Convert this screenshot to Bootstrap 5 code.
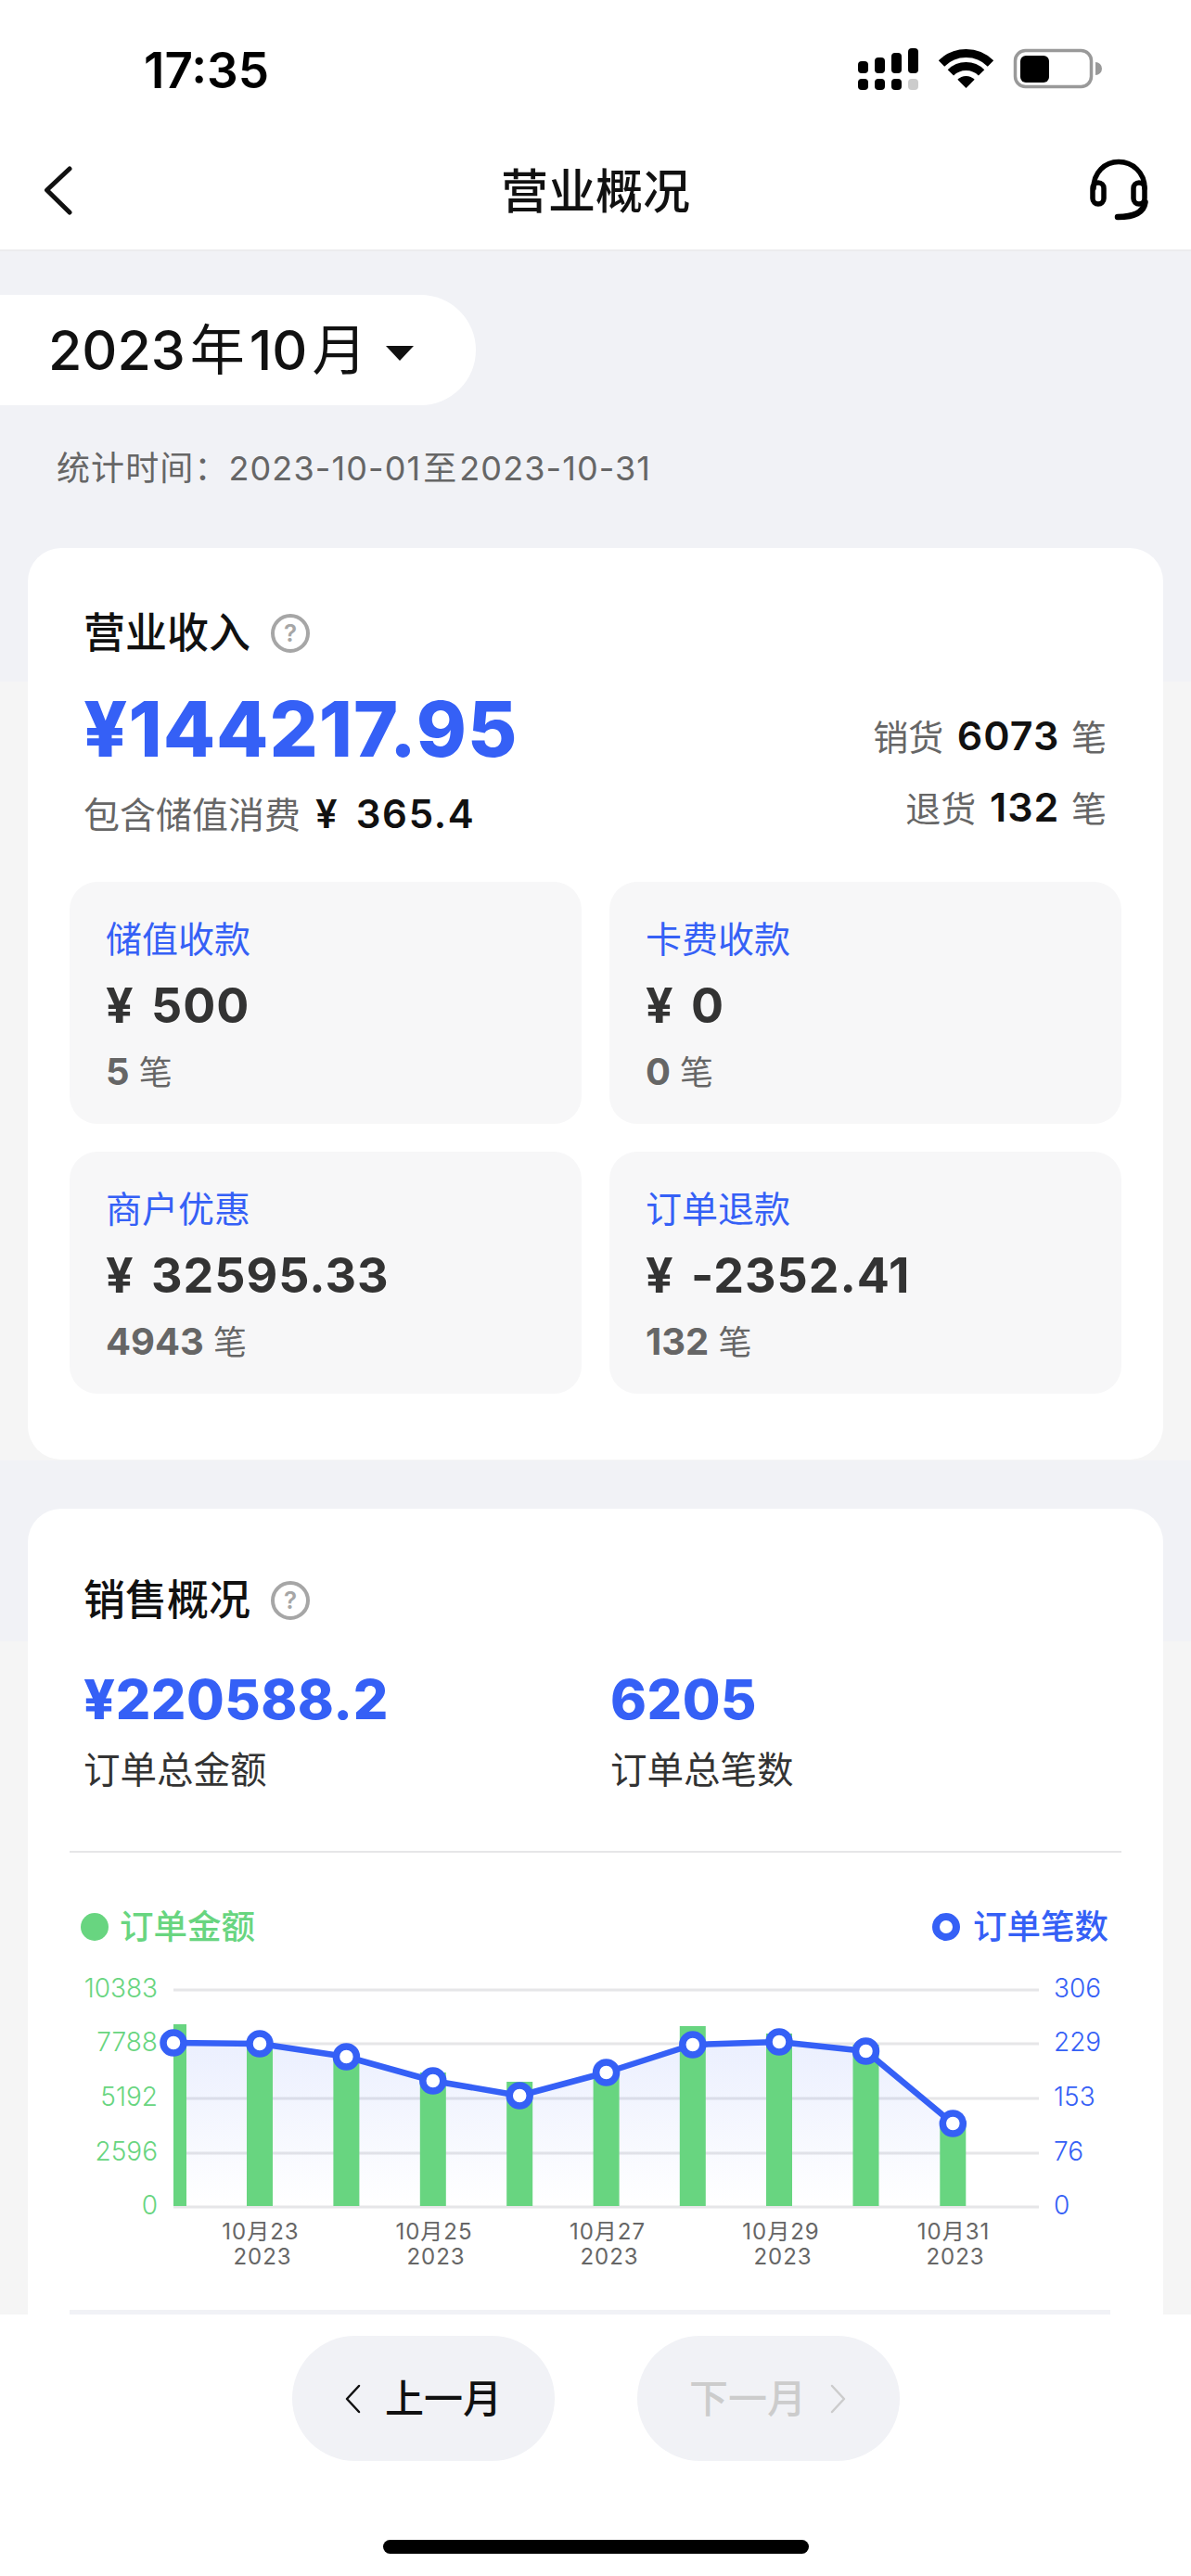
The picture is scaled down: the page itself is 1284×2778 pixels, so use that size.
<!DOCTYPE html>
<html lang="zh">
<head>
<meta charset="utf-8">
<title>营业概况</title>
<link href="https://cdn.jsdelivr.net/npm/bootstrap@5.3.0/dist/css/bootstrap.min.css" rel="stylesheet">
<style>
html,body{margin:0;width:1284px;height:2778px;overflow:hidden;background:#fff}
body{font-family:Inter,"Noto Sans CJK SC",sans-serif;color:#111;display:flex;flex-direction:column}
.status-strip{height:141px;padding:49px 95px 0 155px;flex:none}
.status-time{font-size:53px;line-height:54px;font-weight:600;color:#000}
.status-icons{width:264px;height:50px;display:block}
.top-nav{height:130px;flex:none;padding:0;border-bottom:2px solid #ececee;flex-wrap:nowrap}
.nav-side{width:200px;display:flex}
.nav-side.back{padding-left:47px}
.nav-side.help{justify-content:flex-end;padding-right:45px}
.nav-title{font-size:51px;line-height:60px;font-weight:500;color:#111;margin-top:4px}
.page-scroll{flex:1 1 auto;overflow:hidden;min-height:0}
.band-a{background:linear-gradient(#f1f2f6 464px,#f5f5f5 464px);padding:47px 30px 1px}
.band-b{background:linear-gradient(#f1f2f6 195px,#f5f5f5 195px);padding:52px 30px 0}
.month-pill{width:513px;height:119px;margin-left:-30px;padding-left:52px;background:#fff;border-radius:0 60px 60px 0;font-size:59px;font-weight:500;color:#111;line-height:119px;white-space:nowrap}
.month-pill .cjk{margin:0 5px;font-weight:400}
.month-pill .tri{width:30px;height:16px;margin-left:16px;display:inline-block;vertical-align:10px}
.stat-range{margin:43px 0 0 31px;font-size:36px;line-height:50px;color:#666;letter-spacing:1.100px}
.stat-range span{margin:0 2px}
.panel{border:0;background:#fff;border-radius:36px;padding:0 45px}
.panel.one{margin-top:61px;height:983px;padding-top:62px}
.panel.two{padding-top:69px;height:1000px}
.panel-title{font-size:45px;line-height:60px;font-weight:500;margin-left:15px;color:#111}
.qmark{width:42px;height:42px;border:4px solid #a6a6a6;border-radius:50%;color:#a6a6a6;font-size:26px;line-height:1;font-weight:600;margin-left:22px}
.big-amount{font-size:82px;line-height:90px;font-weight:800;color:#3560f6;margin:29px 0 0 15px;letter-spacing:1px}
.incl-line{font-size:39px;line-height:50px;color:#666;margin:21px 0 0 15px}
.incl-line b{font-weight:600;color:#111;margin-left:16px;font-size:42px;letter-spacing:1.700px;word-spacing:6px}
.side-counts{padding:55px 16px 0 0;font-size:38px;line-height:50px;color:#666;text-align:right}
.side-counts b{font-weight:600;color:#111;font-size:43px;margin:0 2px 0 4px;letter-spacing:1px}
.side-counts div+div{margin-top:25px}
.tile-grid{--bs-gutter-x:30px;--bs-gutter-y:30px;margin-top:17px}
.tile{background:#f7f7f8;border-radius:30px;padding:37px 0 30px 39px}
.tile-label{font-size:39px;line-height:50px;color:#3560f6}
.tile-amount{font-size:52px;line-height:60px;font-weight:700;color:#333;margin-top:17px;letter-spacing:1px;word-spacing:5px}
.tile-count{font-size:36px;line-height:50px;color:#666;margin-top:16px}
.tile-count b{font-weight:700;font-size:40px}
.sum-amount{font-size:59px;line-height:70px;font-weight:800;color:#3560f6;margin-top:42px;letter-spacing:.5px}
.sum-label{font-size:39.500px;line-height:50px;color:#333;margin-top:16px}
.sum-col-l{padding-left:15px}
.sum-col-r{padding-left:16px}
.rule-a{height:2px;background:#e6e6e8;margin-top:62px}
.legend-row{margin-top:55px;font-size:36.500px;line-height:50px;padding:0 14px 0 12px;font-weight:500}
.legend-dot{width:30px;height:30px;border-radius:50%;margin-right:14px;display:inline-block}
.legend-dot.g{background:#68d580;margin-right:12px}
.legend-dot.b{border:8px solid #3560f6;background:#fff}
.c-green{color:#68d580}
.c-blue{color:#3560f6}
.chart-svg{display:block;width:1134px;height:360px;margin-top:7px}
.rule-b{height:5px;background:#f1f2f6;margin-top:21px;width:1122px}
.foot-bar{height:282px;flex:none;background:#fff;padding-top:23px;position:relative}
.month-btn{width:283px;height:135px;border-radius:68px;background:#f1f2f6;border:0;font-size:42px;color:#111;padding:0;display:flex;align-items:center;justify-content:center;gap:26px;font-weight:500}
.month-btn:disabled{background:#f1f2f6;color:#ccc;opacity:1}
.foot-gap{gap:89px;padding-right:0}
.home-bar{width:459px;height:15px;border-radius:8px;background:#000;margin:85px auto 0}
</style>
</head>
<body>
<div class="status-strip d-flex justify-content-between align-items-start">
  <div class="status-time">17:35</div>
  <svg class="status-icons" viewBox="925 50 264 50">
    <g fill="#000">
      <rect x="925" y="67" width="11" height="13" rx="4"/><rect x="943" y="63" width="11" height="17" rx="4"/><rect x="961" y="58" width="11" height="22" rx="4"/><rect x="979" y="53" width="11" height="27" rx="4"/>
      <rect x="925" y="86" width="11" height="12" rx="4"/><rect x="943" y="86" width="11" height="12" rx="4"/><rect x="961" y="86" width="11" height="12" rx="4"/>
    </g>
    <rect x="979" y="86" width="11" height="12" rx="4" fill="#ccc"/>
    <g fill="none" stroke="#000" stroke-width="9">
      <path d="M1015 69.500A37.500 37.500 0 0 1 1068 69.500"/>
      <path d="M1024.900 79.400A23.500 23.500 0 0 1 1058.100 79.400"/>
    </g>
    <path d="M1041.500 96L1032.300 86.800A13 13 0 0 1 1050.700 86.800Z" fill="#000"/>
    <rect x="1094.500" y="55.500" width="82" height="39" rx="11" fill="none" stroke="#999" stroke-width="3.500"/>
    <rect x="1100" y="61" width="31" height="29" rx="6" fill="#000"/>
    <path d="M1181 68A7 7 0 0 1 1181 82Z" fill="#999"/>
  </svg>
</div>
<nav class="navbar top-nav bg-white d-flex justify-content-between align-items-center">
  <div class="nav-side back">
    <svg width="32" height="54" viewBox="47 180 32 54"><path d="M75 184L50.500 207L75 231" fill="none" stroke="#111" stroke-width="5" stroke-linecap="round" stroke-linejoin="round"/></svg>
  </div>
  <div class="nav-title">营业概况</div>
  <div class="nav-side help">
    <svg width="66" height="70" viewBox="1173 172 66 70" fill="none" stroke="#000" stroke-width="5.500" stroke-linecap="round">
      <path d="M1179 205V205C1179 188 1191 176.500 1206 176.500C1221 176.500 1234 188 1234 205"/>
      <rect x="1178" y="199" width="12" height="23" rx="6"/>
      <rect x="1222" y="199" width="12" height="23" rx="6"/>
      <path d="M1234.500 220C1233 231 1222 236 1205 236" stroke-width="6.500"/>
    </svg>
  </div>
</nav>
<main class="page-scroll">
  <section class="band-a">
    <div class="month-pill">2023<span class="cjk">年</span>10<span class="cjk">月</span><svg class="tri" viewBox="0 0 30 16"><path d="M0 0H30L15 16Z" fill="#111"/></svg></div>
    <div class="stat-range">统计时间：2023-10-01<span>至</span>2023-10-31</div>
    <div class="card panel one">
      <div class="d-flex align-items-center"><span class="panel-title">营业收入</span><span class="qmark d-inline-flex align-items-center justify-content-center">?</span></div>
      <div class="d-flex justify-content-between">
        <div>
          <div class="big-amount">¥144217.95</div>
          <div class="incl-line">包含储值消费<b>¥ 365.4</b></div>
        </div>
        <div class="side-counts">
          <div>销货 <b>6073</b> 笔</div>
          <div>退货 <b>132</b> 笔</div>
        </div>
      </div>
      <div class="row tile-grid">
        <div class="col-6"><div class="tile"><div class="tile-label">储值收款</div><div class="tile-amount">¥ 500</div><div class="tile-count"><b>5</b> 笔</div></div></div>
        <div class="col-6"><div class="tile"><div class="tile-label">卡费收款</div><div class="tile-amount">¥ 0</div><div class="tile-count"><b>0</b> 笔</div></div></div>
        <div class="col-6"><div class="tile"><div class="tile-label">商户优惠</div><div class="tile-amount">¥ 32595.33</div><div class="tile-count"><b>4943</b> 笔</div></div></div>
        <div class="col-6"><div class="tile"><div class="tile-label">订单退款</div><div class="tile-amount">¥ -2352.41</div><div class="tile-count"><b>132</b> 笔</div></div></div>
      </div>
    </div>
  </section>
  <section class="band-b">
    <div class="card panel two">
      <div class="d-flex align-items-center"><span class="panel-title">销售概况</span><span class="qmark d-inline-flex align-items-center justify-content-center">?</span></div>
      <div class="row g-0">
        <div class="col-6 sum-col-l"><div class="sum-amount">¥220588.2</div><div class="sum-label">订单总金额</div></div>
        <div class="col-6 sum-col-r"><div class="sum-amount">6205</div><div class="sum-label">订单总笔数</div></div>
      </div>
      <div class="rule-a"></div>
      <div class="legend-row d-flex justify-content-between">
        <div class="d-flex align-items-center c-green"><span class="legend-dot g"></span>订单金额</div>
        <div class="d-flex align-items-center c-blue"><span class="legend-dot b"></span>订单笔数</div>
      </div>
      <svg class="chart-svg" viewBox="75 2110 1134 360">
        <defs>
          <linearGradient id="areaFill" x1="0" y1="0" x2="0" y2="1">
            <stop offset="0" stop-color="#3560f6" stop-opacity=".1"/>
            <stop offset="1" stop-color="#3560f6" stop-opacity="0"/>
          </linearGradient>
        </defs>
        <g stroke="#e6e6e8" stroke-width="3">
          <path d="M187 2146H1120M187 2204H1120M187 2263H1120M187 2322H1120M187 2380H1120"/>
        </g>
        <path d="M187 2203L280 2204L373.400 2218L466.800 2244L560.200 2260L653.600 2235L746.800 2205L840 2202L933.500 2212L1027.300 2290V2379H187Z" fill="url(#areaFill)"/>
        <g fill="#68d580">
          <rect x="187" y="2183" width="14" height="196"/>
          <rect x="266" y="2205" width="28" height="174"/>
          <rect x="359.400" y="2215" width="28" height="164"/>
          <rect x="452.800" y="2235" width="28" height="144"/>
          <rect x="546.200" y="2245" width="28" height="134"/>
          <rect x="639.600" y="2235" width="28" height="144"/>
          <rect x="732.800" y="2185" width="28" height="194"/>
          <rect x="826" y="2193" width="28" height="186"/>
          <rect x="919.500" y="2205" width="28" height="174"/>
          <rect x="1013.300" y="2290" width="28" height="89"/>
        </g>
        <path d="M187 2203L280 2204L373.400 2218L466.800 2244L560.200 2260L653.600 2235L746.800 2205L840 2202L933.500 2212L1027.300 2290" fill="none" stroke="#3560f6" stroke-width="6.500" stroke-linejoin="round"/>
        <g fill="#fff" stroke="#3560f6" stroke-width="7.500">
          <circle cx="187" cy="2203" r="11"/><circle cx="280" cy="2204" r="11"/><circle cx="373.400" cy="2218" r="11"/><circle cx="466.800" cy="2244" r="11"/><circle cx="560.200" cy="2260" r="11"/><circle cx="653.600" cy="2235" r="11"/><circle cx="746.800" cy="2205" r="11"/><circle cx="840" cy="2202" r="11"/><circle cx="933.500" cy="2212" r="11"/><circle cx="1027.300" cy="2290" r="11"/>
        </g>
        <g font-size="28" font-weight="300" fill="#68d580" text-anchor="end">
          <text x="170" y="2154">10383</text><text x="170" y="2212">7788</text><text x="170" y="2271">5192</text><text x="170" y="2330">2596</text><text x="170" y="2388">0</text>
        </g>
        <g font-size="28" font-weight="300" fill="#3560f6">
          <text x="1136" y="2154">306</text><text x="1136" y="2212">229</text><text x="1136" y="2271">153</text><text x="1136" y="2330">76</text><text x="1136" y="2388">0</text>
        </g>
        <g font-size="24" fill="#666" text-anchor="middle" letter-spacing="1">
          <text x="281" y="2415">10月23</text><text x="283" y="2442">2023</text>
          <text x="468" y="2415">10月25</text><text x="470" y="2442">2023</text>
          <text x="655" y="2415">10月27</text><text x="657" y="2442">2023</text>
          <text x="842" y="2415">10月29</text><text x="844" y="2442">2023</text>
          <text x="1028" y="2415">10月31</text><text x="1030" y="2442">2023</text>
        </g>
      </svg>
      <div class="rule-b"></div>
    </div>
  </section>
</main>
<footer class="foot-bar">
  <div class="d-flex justify-content-center foot-gap">
    <button class="btn month-btn" type="button"><svg width="18" height="32" viewBox="0 0 18 32"><path d="M16 2L3 16L16 30" fill="none" stroke="#111" stroke-width="2.500" stroke-linecap="round" stroke-linejoin="round"/></svg><span>上一月</span></button>
    <button class="btn month-btn" type="button" disabled><span>下一月</span><svg width="18" height="32" viewBox="0 0 18 32"><path d="M2 2L15 16L2 30" fill="none" stroke="#ccc" stroke-width="2.500" stroke-linecap="round" stroke-linejoin="round"/></svg></button>
  </div>
  <div class="home-bar"></div>
</footer>
<script src="https://cdn.jsdelivr.net/npm/bootstrap@5.3.0/dist/js/bootstrap.bundle.min.js"></script>
</body>
</html>
